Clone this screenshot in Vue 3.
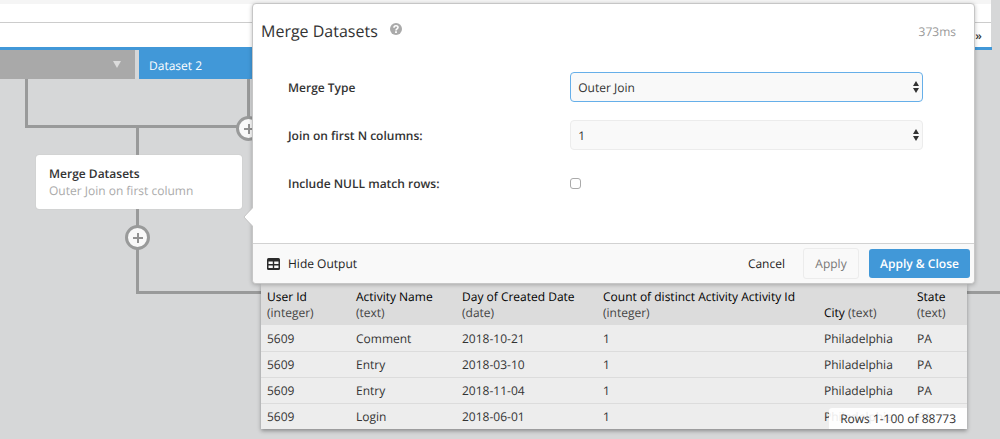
<script setup>
import { ref } from 'vue'

const mergeType = ref('Outer Join')
const joinColumns = ref('1')
const includeNull = ref(false)

const columns = [
  { key: 'user', name: 'User Id', type: 'integer' },
  { key: 'activity', name: 'Activity Name', type: 'text' },
  { key: 'day', name: 'Day of Created Date', type: 'date' },
  { key: 'count', name: 'Count of distinct Activity Activity Id', type: 'integer' },
  { key: 'city', name: 'City', type: 'text' },
  { key: 'state', name: 'State', type: 'text' },
]

const rows = [
  ['5609', 'Comment', '2018-10-21', '1', 'Philadelphia', 'PA'],
  ['5609', 'Entry', '2018-03-10', '1', 'Philadelphia', 'PA'],
  ['5609', 'Entry', '2018-11-04', '1', 'Philadelphia', 'PA'],
  ['5609', 'Login', '2018-06-01', '1', 'Philadelphia', 'PA'],
]
</script>

<template>
  <div class="page">
    <div class="workspace">
      <header class="topbar">
        <div class="strip"></div>
        <div class="bar"></div>
        <div class="toolbar"><button type="button" class="more" aria-label="More">»</button></div>
      </header>
      <nav class="tabs">
        <button type="button" class="tab tab-first" aria-label="Dataset menu">
          <svg width="8" height="7" viewBox="0 0 8 7"><path d="M0 0h8L4 7z" fill="#dcdcdc" /></svg>
        </button>
        <button type="button" class="tab tab-active">Dataset 2</button>
      </nav>
    </div>

    <main class="canvas">
      <svg class="wires" aria-hidden="true">
        <g stroke="#999a9a" stroke-width="3" fill="none">
          <path d="M26.500 0V47.500H248.500V0M137.500 47.500V213.500" />
          <line x1="136" y1="213.500" x2="100%" y2="213.500" />
        </g>
      </svg>
      <button type="button" class="add add-top" aria-label="Add step">
        <svg width="12" height="12" viewBox="0 0 12 12"><path d="M6 1v10M1 6h10" stroke="#929292" stroke-width="2" /></svg>
      </button>
      <div class="node">
        <strong>Merge Datasets</strong>
        <span>Outer Join on first column</span>
      </div>
      <button type="button" class="add add-bottom" aria-label="Add step">
        <svg width="12" height="12" viewBox="0 0 12 12"><path d="M6 1v10M1 6h10" stroke="#929292" stroke-width="2" /></svg>
      </button>
    </main>

    <div class="popover">
      <form class="dialog" @submit.prevent>
        <svg class="pointer" width="10" height="18" viewBox="0 0 10 18" aria-hidden="true">
          <path d="M10 0L1 9l9 9z" fill="#fff" />
          <path d="M9 0L1 9l8 9" fill="none" stroke="#c6c6c6" />
        </svg>
        <div class="head">
          <h1>Merge Datasets</h1>
          <svg class="help" width="12" height="12" viewBox="0 0 12 12" aria-hidden="true">
            <circle cx="6" cy="6" r="6" fill="#aaa" />
            <path d="M4 4.700C4 2.200 8 2.200 8 4.500C8 6 6 5.800 6 7.400" fill="none" stroke="#fff" stroke-width="1.600" />
            <path d="M5.100 8.300h1.800v1.600H5.100z" fill="#fff" />
          </svg>
          <span class="time">373ms</span>
        </div>
        <div class="fields">
          <label for="type">Merge Type</label>
          <div class="select">
            <select id="type" v-model="mergeType" class="focused"><option>Outer Join</option><option>Inner Join</option></select>
            <svg width="6" height="12" viewBox="0 0 6 12" aria-hidden="true"><path d="M3 0l3 5H0zM0 7h6l-3 5z" fill="#333" /></svg>
          </div>
          <label for="columns">Join on first N columns:</label>
          <div class="select">
            <select id="columns" v-model="joinColumns"><option>1</option><option>2</option></select>
            <svg width="6" height="12" viewBox="0 0 6 12" aria-hidden="true"><path d="M3 0l3 5H0zM0 7h6l-3 5z" fill="#333" /></svg>
          </div>
          <label for="nulls">Include NULL match rows:</label>
          <input id="nulls" v-model="includeNull" type="checkbox" />
        </div>
        <footer class="foot">
          <button type="button" class="output-toggle">
            <svg width="13" height="12" viewBox="0 0 13 12" aria-hidden="true">
              <rect width="13" height="12" rx="1.500" fill="#2b2b2b" />
              <path d="M1.500 3.500h4.300v2.500H1.500zM7.200 3.500h4.300v2.500H7.200zM1.500 7.500h4.300v2.500H1.500zM7.200 7.500h4.300v2.500H7.200z" fill="#fafafa" />
            </svg>
            Hide Output
          </button>
          <button type="button" class="cancel">Cancel</button>
          <button type="button" class="apply">Apply</button>
          <button type="submit" class="primary">Apply &amp; Close</button>
        </footer>
      </form>

      <section class="output">
        <table>
          <colgroup><col v-for="c in columns" :key="c.key" :class="'col-' + c.key" /></colgroup>
          <thead>
            <tr>
              <th v-for="c in columns" :key="c.key" scope="col">{{ c.name }} <span>({{ c.type }})</span></th>
            </tr>
          </thead>
          <tbody>
            <tr v-for="(row, i) in rows" :key="i"><td v-for="(cell, j) in row" :key="j">{{ cell }}</td></tr>
          </tbody>
        </table>
        <div class="count">Rows 1-100 of 88773</div>
      </section>
    </div>
  </div>
</template>

<style>
body { background: #d6d7d8; }
</style>

<style scoped>
.page {
  position: relative;
  display: flex;
  flex-direction: column;
  min-height: 100vh;
  overflow: hidden;
  background: #d6d7d8;
  color: #333;
  font-family: "Open Sans", "Noto Sans", sans-serif;
  font-size: 12px;
  text-rendering: geometricPrecision;
}
.page *, .page { box-sizing: border-box; }
button, select, input { font: inherit; color: inherit; margin: 0; text-rendering: inherit; }
button { border: 0; padding: 0; background: none; cursor: pointer; }
svg { display: block; flex: none; }

.workspace { margin-right: 8px; }
.topbar { border-bottom: 3px solid #4198d8; }
.strip { height: 4px; margin-right: 1px; background: #f5f5f5; }
.bar { height: 19px; margin-right: 1px; background: #fff; border-bottom: 1px solid #ccc; }
.toolbar { display: flex; justify-content: flex-end; height: 24px; margin-right: 1px; padding-right: 9px; background: #fff; }
.more { font-weight: 600; }
.tabs { display: flex; gap: 4px; }
.tab { display: flex; align-items: center; height: 29px; color: #fff; }
.tab-first { width: 135px; padding-right: 14px; justify-content: flex-end; background: #a9a9a9; }
.tab-active { width: 224px; padding: 1px 0 0 10px; background: #4198d8; }

.canvas { position: relative; flex: 1; min-height: 360px; }
.wires { position: absolute; inset: 0; width: 100%; height: 100%; }
.node {
  position: absolute;
  left: 36px;
  top: 76px;
  display: flex;
  flex-direction: column;
  width: 206px;
  padding: 10px 13px;
  line-height: 17px;
  background: #fff;
  border-radius: 3px;
  box-shadow: 0 0 1px #aaa;
}
.node strong { font-weight: 600; }
.node span { color: #aaa; }
.add {
  position: absolute;
  display: flex;
  align-items: center;
  justify-content: center;
  width: 25px;
  height: 25px;
  border: 3px solid #999a9a;
  border-radius: 50%;
  background: #f9f9f9;
}
.add-top { left: 236px; top: 37px; }
.add-bottom { left: 125px; top: 146px; }

.popover { position: absolute; left: 252px; right: 25px; top: 3px; }
.dialog {
  position: relative;
  z-index: 1;
  background: #fff;
  border: 1px solid #c6c6c6;
  border-radius: 4px;
  box-shadow: 0 1px 4px rgba(0, 0, 0, 0.25);
}
.pointer { position: absolute; left: -10px; top: 204px; }
.head { display: flex; align-items: center; height: 54px; padding: 0 18px 0 8px; }
.head h1 { margin: 0; font-size: 16px; font-weight: 400; }
.help { margin: 0 0 5px 12px; }
.time { margin-left: auto; color: #999; }
.fields {
  display: grid;
  grid-template-columns: 4fr 5fr;
  grid-auto-rows: 48px;
  align-items: center;
  height: 185px;
  padding: 5px 51px 0 35px;
}
.fields label { font-weight: 600; }
.select { position: relative; }
.select select {
  display: block;
  width: 100%;
  height: 30px;
  padding: 0 7px;
  appearance: none;
  background: #f9f9f9;
  border: 1px solid #ececec;
  border-radius: 4px;
  outline: 0;
}
.select select.focused { border-color: #66afe9; }
.select svg { position: absolute; right: 4px; top: 9px; pointer-events: none; }
.fields input {
  width: 11px;
  height: 11px;
  appearance: none;
  background: #fff;
  border: 1px solid #aaa;
  border-radius: 3px;
}
.fields input:checked { background: #4198d8; }
.foot {
  display: flex;
  align-items: center;
  height: 40px;
  padding: 0 4px 0 14px;
  background: #f9f9f9;
  border-top: 1px solid #d2d2d2;
  border-radius: 0 0 4px 4px;
}
.output-toggle, .cancel { color: #222; }
.output-toggle { display: flex; align-items: center; gap: 8px; margin-right: auto; }
.apply { width: 56px; height: 31px; margin: 0 10px 0 18px; color: #777; border: 1px solid #ececec; border-radius: 3px; }
.primary { width: 101px; height: 29px; color: #fff; font-weight: 600; background: #4198d8; border-radius: 3px; }

.output { position: relative; margin: 0 8px 0 9px; background: #ededed; box-shadow: 0 2px 4px rgba(0, 0, 0, 0.35); }
table { width: 100%; table-layout: fixed; border-collapse: separate; border-spacing: 0; }
.col-user { width: 89px; }
.col-activity { width: 106px; }
.col-day { width: 141px; }
.col-city { width: 93px; }
.col-state { width: 56px; }
th { height: 41px; padding: 4px 20px 4px 6px; text-align: left; vertical-align: bottom; font-weight: 400; line-height: 16px; color: #000; background: #dcdcdc; }
th span { color: #444; }
td { height: 26px; padding: 1px 6px 0; line-height: 16px; }
tr + tr td { border-top: 1px solid #dcdcdc; }
.count { position: absolute; right: 0; bottom: 0; padding: 0 11px; line-height: 21px; background: rgba(255, 255, 255, 0.9); border-radius: 3px 0 0; }
</style>
